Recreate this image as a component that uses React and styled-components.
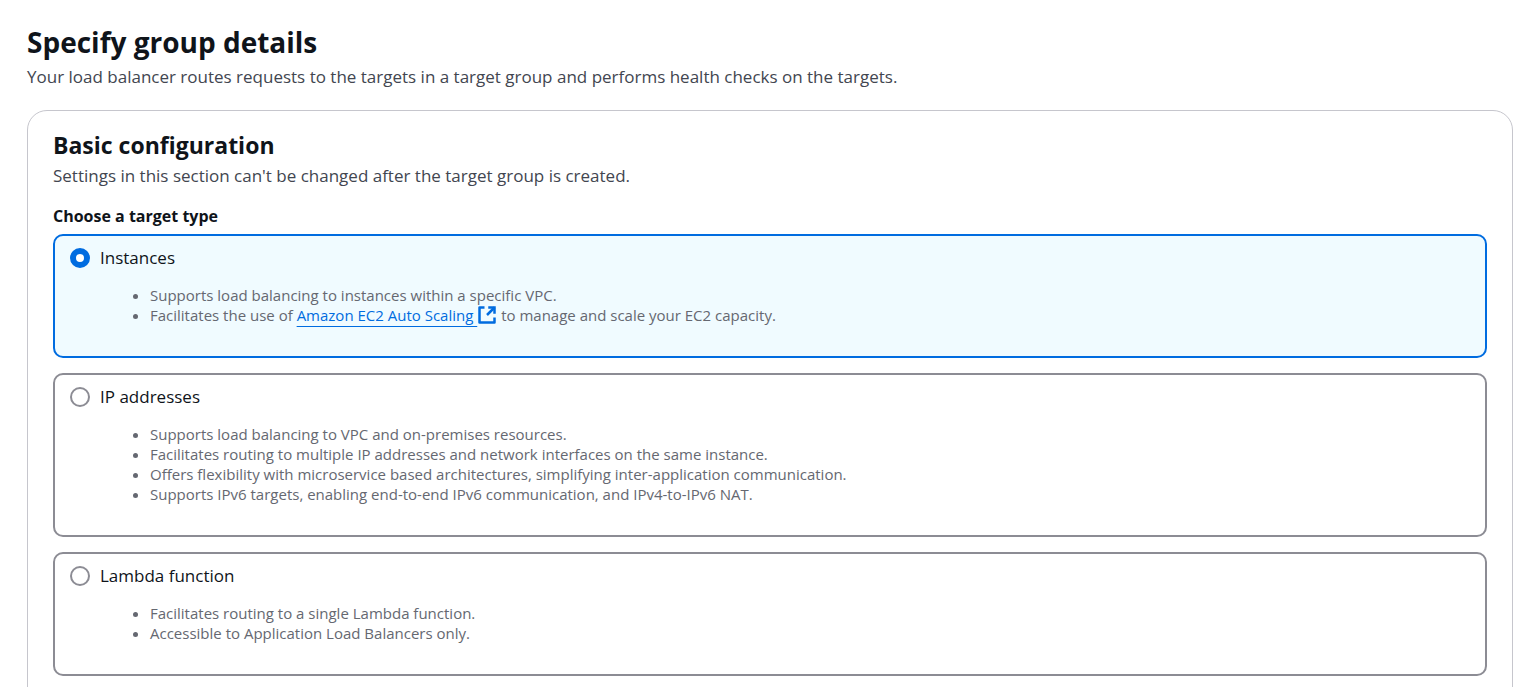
import React, { useState } from "react";
import styled, { createGlobalStyle } from "styled-components";

const Global = createGlobalStyle`
  * { box-sizing: border-box; }
  body {
    margin: 0;
    background: #ffffff;
    color: #0f141a;
    font-family: "Open Sans", "Noto Sans", sans-serif;
    font-size: 17px;
    line-height: 24px;
    overflow: hidden;
  }
`;

const Page = styled.main`
  padding: 24px 16px 0 27px;
`;

const PageTitle = styled.h1`
  margin: 0;
  font-size: 28px;
  line-height: 36px;
  font-weight: 700;
`;

const Description = styled.p`
  margin: 0;
  padding-top: 5px;
  color: #424650;
`;

const Panel = styled.section`
  margin-top: 21px;
  padding: 20px 25px 32px;
  border: 1px solid #c6c6cd;
  border-radius: 20px;
`;

const PanelTitle = styled.h2`
  margin: 0;
  font-size: 23px;
  line-height: 28px;
  font-weight: 700;
`;

const TypeGroup = styled.fieldset`
  margin: 16px 0 0;
  padding: 0;
  border: 0;
  min-width: 0;
`;

const Legend = styled.legend`
  padding: 0 0 6px;
  font-size: 16px;
  font-weight: 700;
`;

const Tiles = styled.div`
  display: grid;
  gap: 15px;
`;

const Tile = styled.div`
  padding: 10px 15px 31px;
  border: 2px solid ${(p) => (p.$selected ? "#006ce0" : "#8c8c94")};
  border-radius: 10px;
  background: ${(p) => (p.$selected ? "#f0fbff" : "#ffffff")};
`;

const TileLabel = styled.label`
  display: flex;
  align-items: center;
  gap: 10px;
`;

const Radio = styled.input`
  appearance: none;
  width: 20px;
  height: 20px;
  margin: 0;
  border: 2px solid #8c8c94;
  border-radius: 50%;
  background: #ffffff;
  &:checked {
    border: 6px solid #006ce0;
  }
`;

const Points = styled.ul`
  margin: 15px 0 0;
  padding: 0 0 0 80px;
  color: #656871;
  font-size: 15px;
  line-height: 20px;
`;

const ExternalLink = styled.a`
  color: #006ce0;
  text-decoration: underline;
  text-underline-offset: 5px;
  text-decoration-thickness: 1px;
`;

const LinkIcon = styled.svg`
  width: 20px;
  height: 20px;
  vertical-align: top;
`;

function External() {
  return (
    <LinkIcon viewBox="0 0 16 16" fill="none" stroke="currentColor" strokeWidth="2" aria-hidden="true">
      <path d="M10 2h4v4" strokeLinecap="square" />
      <path d="m8 8 6-6" />
      <path d="M14 10v4H2V2h4" strokeLinejoin="round" />
    </LinkIcon>
  );
}

const types = [
  {
    id: "instances",
    name: "Instances",
    points: [
      "Supports load balancing to instances within a specific VPC.",
      <>
        Facilitates the use of <ExternalLink href="#auto-scaling">Amazon EC2 Auto Scaling <External /></ExternalLink> to
        manage and scale your EC2 capacity.
      </>,
    ],
  },
  {
    id: "ip",
    name: "IP addresses",
    points: [
      "Supports load balancing to VPC and on-premises resources.",
      "Facilitates routing to multiple IP addresses and network interfaces on the same instance.",
      "Offers flexibility with microservice based architectures, simplifying inter-application communication.",
      "Supports IPv6 targets, enabling end-to-end IPv6 communication, and IPv4-to-IPv6 NAT.",
    ],
  },
  {
    id: "lambda",
    name: "Lambda function",
    points: ["Facilitates routing to a single Lambda function.", "Accessible to Application Load Balancers only."],
  },
];

export default function App() {
  const [selected, setSelected] = useState("instances");
  return (
    <>
      <Global />
      <Page>
        <PageTitle>Specify group details</PageTitle>
        <Description>
          Your load balancer routes requests to the targets in a target group and performs health checks on the targets.
        </Description>
        <Panel>
          <PanelTitle>Basic configuration</PanelTitle>
          <Description>Settings in this section can't be changed after the target group is created.</Description>
          <TypeGroup>
            <Legend>Choose a target type</Legend>
            <Tiles>
              {types.map((t) => (
                <Tile key={t.id} $selected={t.id === selected}>
                  <TileLabel htmlFor={t.id}>
                    <Radio
                      type="radio"
                      name="target-type"
                      id={t.id}
                      checked={t.id === selected}
                      onChange={() => setSelected(t.id)}
                    />
                    {t.name}
                  </TileLabel>
                  <Points>
                    {t.points.map((point, i) => (
                      <li key={i}>{point}</li>
                    ))}
                  </Points>
                </Tile>
              ))}
            </Tiles>
          </TypeGroup>
        </Panel>
      </Page>
    </>
  );
}
